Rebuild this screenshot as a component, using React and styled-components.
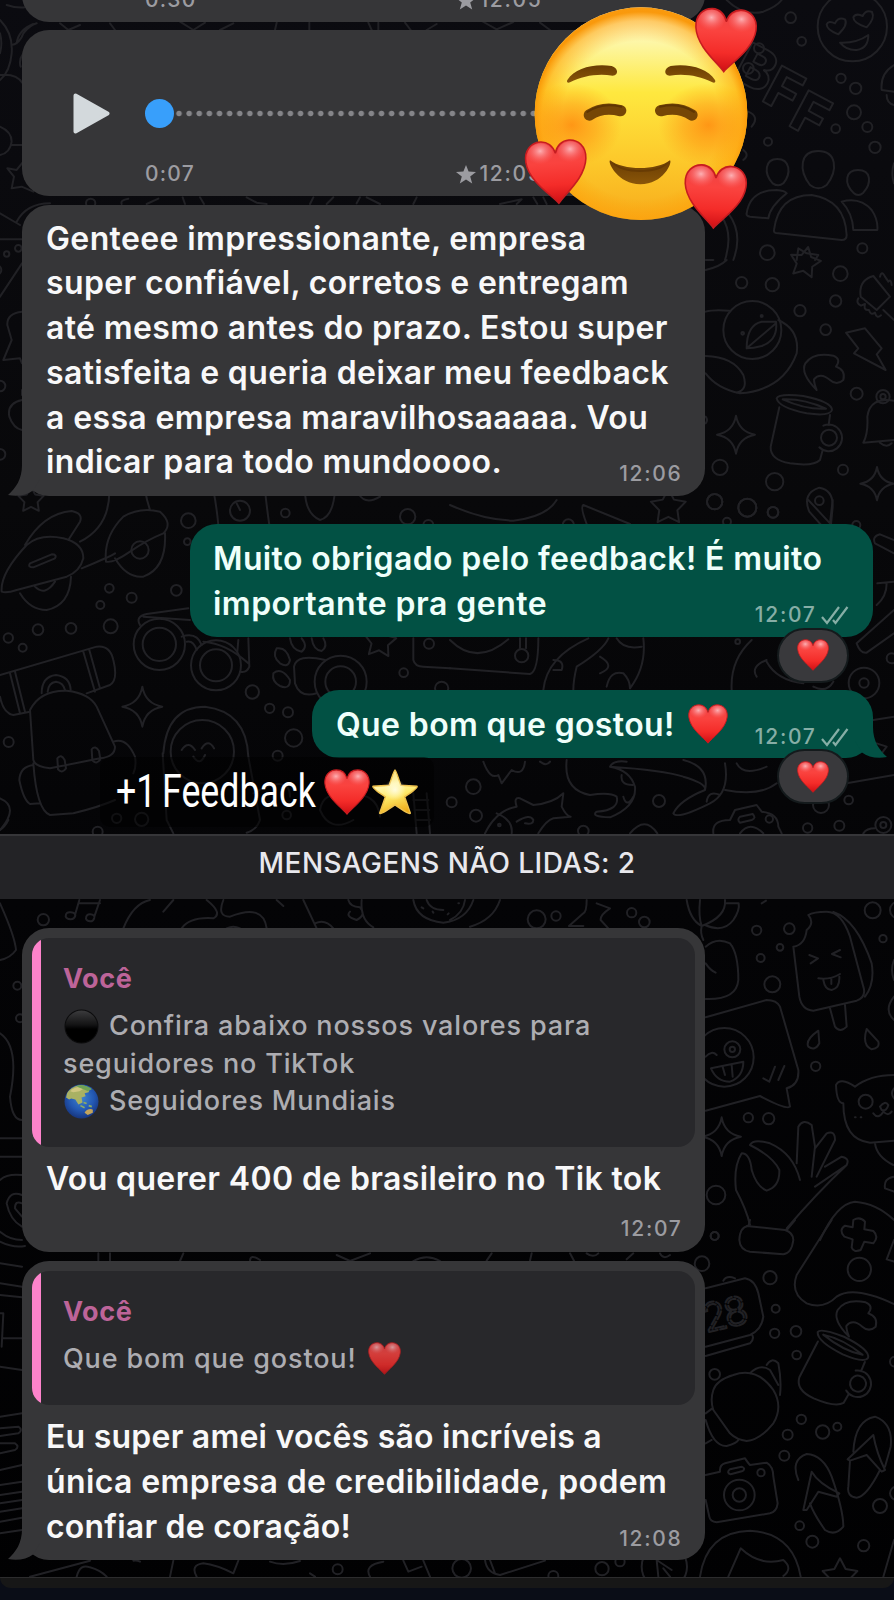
import React, { useId } from 'react';
import styled, { createGlobalStyle } from 'styled-components';

const GlobalStyle = createGlobalStyle`
  *, *::before, *::after { box-sizing: border-box; }
  html, body { margin: 0; padding: 0; background: #0a0d17; }
  body { overflow: hidden; }
`;

const colors = {
  incoming: '#363638',
  outgoing: '#025144',
  quote: '#28282b',
  pink: '#fd83cb',
};

/* ---------- layout ---------- */

const Screen = styled.main`
  position: relative;
  width: 894px;
  height: 1600px;
  overflow: hidden;
  display: flex;
  flex-direction: column;
  font-family: Inter, 'Liberation Sans', sans-serif;
  font-weight: 500;
  background: linear-gradient(#0b0b10, #08080a 500px, #040406 900px, #010102 1600px);
`;

const Wallpaper = styled.svg`
  position: absolute;
  inset: 0;
  width: 894px;
  height: 1600px;
  fill: none;
  stroke: #212125;
  stroke-width: 6;
  stroke-linecap: round;
  stroke-linejoin: round;
  font-family: Inter, sans-serif;
  font-weight: 800;
`;

const MessageList = styled.section`
  position: relative;
  display: flex;
  flex-direction: column;
  padding: ${(p) => p.$pad};
`;

const Bubble = styled.article`
  position: relative;
  display: flex;
  flex-direction: column;
  align-self: ${(p) => (p.$out ? 'flex-end' : 'flex-start')};
  width: ${(p) => p.$width || 683}px;
  margin-top: ${(p) => p.$gap || 0}px;
  padding: ${(p) => p.$pad || '12px 24px 10.5px 24px'};
  border-radius: 27px;
  color: ${(p) => (p.$out ? '#effffb' : '#f8f8f9')};
  background: ${(p) => (p.$out ? colors.outgoing : colors.incoming)};
`;

const Line = styled.p`
  margin: 0;
  font-size: 32px;
  font-weight: 570;
  line-height: 44.8px;
  letter-spacing: ${(p) => p.$track || 0.37}px;
  white-space: nowrap;
`;

const EmojiLine = styled(Line)`
  display: flex;
  align-items: center;
  gap: 13px;
`;

const LastRow = styled.div`
  display: flex;
  align-items: flex-end;
  justify-content: space-between;
`;

const Meta = styled.span`
  display: flex;
  align-items: center;
  justify-content: flex-end;
  gap: ${(p) => p.$gap || 6}px;
  height: 24px;
  margin: ${(p) => p.$margin || '0 0 -1px'};
  font-size: 21px;
  line-height: 24px;
  letter-spacing: ${(p) => p.$track || 1.7}px;
  color: ${(p) => (p.$out ? '#86aea6' : '#9c9ca1')};
`;

const Clock = styled.time`
  margin-right: -1.5px;
`;

const ChecksIcon = styled.svg`
  flex: none;
  width: 28px;
  height: 20px;
  fill: none;
  stroke: currentColor;
  stroke-width: 2.2;
`;

const TailShape = styled.svg`
  position: absolute;
  bottom: 0;
  width: 46px;
  height: 31px;
  ${(p) => (p.$out ? 'right: -14px; transform: scaleX(-1);' : 'left: -14px;')}
  fill: ${(p) => (p.$out ? colors.outgoing : colors.incoming)};
`;

const Reaction = styled.span`
  position: absolute;
  right: 24px;
  bottom: -46px;
  display: flex;
  align-items: center;
  justify-content: center;
  width: 72px;
  height: 55px;
  border: 2px solid #141a1c;
  border-radius: 28px;
  background: #39393c;
`;

/* ---------- voice message ---------- */

const Voice = styled.article`
  display: flex;
  width: 683px;
  height: 166px;
  margin-top: ${(p) => p.$gap}px;
  padding: 63px 24px 11px 51px;
  border-radius: 27px;
  background: ${colors.incoming};
`;

const PlayIcon = styled.svg`
  flex: none;
  width: 37px;
  height: 41px;
  margin-right: 35px;
  fill: #d3d9dc;
  stroke: #d3d9dc;
  stroke-width: 4;
  stroke-linejoin: round;
`;

const VoiceBody = styled.div`
  display: flex;
  flex-direction: column;
  justify-content: space-between;
  width: 396px;
`;

const Track = styled.div`
  display: flex;
  align-items: center;
  height: 40px;
`;

const Knob = styled.span`
  width: 29px;
  height: 29px;
  border-radius: 50%;
  background: #389ffb;
`;

const Dots = styled.span`
  flex: 1;
  height: 7px;
  background: radial-gradient(circle at 5px 3.5px, #858589 2.4px, transparent 3.2px) 0 0 / 10.14px 7px repeat-x;
`;

const VoiceFooter = styled.div`
  display: flex;
  justify-content: space-between;
`;

/* ---------- quoted message ---------- */

const Quote = styled.blockquote`
  margin: 0;
  padding: 22px 20px 27px 31px;
  border-radius: 17px;
  background: linear-gradient(to right, ${colors.pink} 9.5px, ${colors.quote} 9.5px);
  color: #adadb2;
  font-size: 27px;
  font-weight: 540;
  line-height: 37.5px;
  letter-spacing: 0.84px;
`;

const QuoteAuthor = styled.div`
  margin-bottom: 10px;
  font-weight: 750;
  letter-spacing: 0.6px;
  color: #bd6499;
`;

const QuoteLine = styled.div`
  display: flex;
  align-items: center;
  gap: ${(p) => p.$gap || 9}px;
  height: 37.5px;
  white-space: nowrap;
`;

const QuoteReply = styled.div`
  display: flex;
  flex-direction: column;
  padding: 10.5px 14px 0 14px;
`;

/* ---------- divider, footer, stickers ---------- */

const UnreadBar = styled.div`
  position: relative;
  flex: none;
  height: 65px;
  padding-top: 8.5px;
  border-top: 2px solid #363639;
  background: #232326;
  color: #e8e8ed;
  font-size: 28px;
  line-height: 38px;
  letter-spacing: 0.42px;
  text-align: center;
`;

const FooterEdge = styled.footer`
  position: relative;
  flex: none;
  height: 23px;
  margin-top: 17px;
  background: #0a0d17;

  &::before {
    content: '';
    display: block;
    height: 11px;
    border-top: 1px solid #2c2c2d;
    border-radius: 0 0 20px 20px;
    background: #171717;
  }
`;

const FaceSticker = styled.svg`
  position: absolute;
  left: 520px;
  top: 0;
  width: 240px;
  height: 234px;
`;

const Caption = styled.div`
  position: absolute;
  left: 100px;
  top: 757px;
  display: flex;
  align-items: center;
  height: 70px;
  width: 334px;
  padding-left: 16px;
  border-radius: 10px;
  background: rgba(0, 0, 0, 0.5);
  color: #fff;
`;

const CaptionText = styled.span`
  flex: none;
  width: 208px;
  font-family: Roboto, 'Liberation Sans', sans-serif;
  font-size: 45.5px;
  font-weight: 450;
  line-height: 68px;
  word-spacing: -4px;
  white-space: nowrap;
  transform: scaleX(0.785);
  transform-origin: left;
`;

const EmojiSvg = styled.svg`
  flex: none;
  width: ${(p) => p.$size}px;
  height: ${(p) => p.$size}px;
  margin: ${(p) => p.$margin || 0};
  opacity: ${(p) => p.$opacity || 1};
`;

/* ---------- emoji drawings ---------- */

const HEART = 'M50 98C40 85 5 62 2 32C0 13 13 2 27 2C38 2 47 9 50 21C53 9 62 2 73 2C87 2 100 13 98 32C95 62 60 85 50 98Z';

function HeartShape() {
  const id = useId();
  return (
    <>
      <defs>
        <linearGradient id={id} x1="0" y1="0" x2="0" y2="1">
          <stop offset="0" stopColor="#ec4446" />
          <stop offset="0.35" stopColor="#fa433f" />
          <stop offset="0.7" stopColor="#f42c29" />
          <stop offset="1" stopColor="#cf0f14" />
        </linearGradient>
        <radialGradient id={`${id}s`} cx="0.5" cy="0.35" r="0.6">
          <stop offset="0" stopColor="#ffc4c8" stopOpacity="0.85" />
          <stop offset="1" stopColor="#ff6a6a" stopOpacity="0" />
        </radialGradient>
      </defs>
      <path d={HEART} fill={`url(#${id})`} stroke="#c61c20" strokeWidth="2.5" />
      <ellipse cx="26" cy="21" rx="20" ry="17" fill={`url(#${id}s)`} />
      <ellipse cx="74" cy="21" rx="20" ry="17" fill={`url(#${id}s)`} />
    </>
  );
}

const Heart = (props) => (
  <EmojiSvg viewBox="0 0 100 100" {...props}><HeartShape /></EmojiSvg>
);

const StarEmoji = (props) => (
  <EmojiSvg viewBox="0 0 100 100" {...props}>
    <defs>
      <linearGradient id="gold" x1="0.3" y1="0" x2="0.6" y2="1">
        <stop offset="0" stopColor="#f7dc7a" />
        <stop offset="0.35" stopColor="#fff6ac" />
        <stop offset="0.6" stopColor="#fee968" />
        <stop offset="1" stopColor="#efab17" />
      </linearGradient>
      <radialGradient id="shine" cx="0.5" cy="0.45" r="0.4">
        <stop offset="0" stopColor="#fffde6" stopOpacity="0.9" />
        <stop offset="1" stopColor="#fffde6" stopOpacity="0" />
      </radialGradient>
    </defs>
    <path d="M50 4Q52 4 62 36L96 38Q98 42 70 60L82 94Q80 98 50 77Q20 98 18 94L30 60Q2 42 4 38L38 36Q48 4 50 4Z" fill="url(#gold)" stroke="#eec04c" strokeWidth="3" strokeLinejoin="round" />
    <circle cx="50" cy="48" r="28" fill="url(#shine)" />
  </EmojiSvg>
);

const BlackCircle = (props) => (
  <EmojiSvg viewBox="0 0 34 34" {...props}>
    <defs>
      <linearGradient id="ball" x1="0" y1="0" x2="0" y2="1">
        <stop offset="0" stopColor="#3c3c3e" />
        <stop offset="0.45" stopColor="#131314" />
        <stop offset="0.58" stopColor="#000" />
      </linearGradient>
    </defs>
    <circle cx="17" cy="17" r="16" fill="url(#ball)" stroke="#0c0c0d" strokeWidth="1" />
  </EmojiSvg>
);

const Globe = (props) => (
  <EmojiSvg viewBox="0 0 34 34" {...props}>
    <defs>
      <radialGradient id="sea" cx="0.5" cy="0.4" r="0.6">
        <stop offset="0" stopColor="#3f83cf" />
        <stop offset="0.6" stopColor="#2358b3" />
        <stop offset="1" stopColor="#17367f" />
      </radialGradient>
    </defs>
    <circle cx="17" cy="17" r="16.5" fill="url(#sea)" />
    <path d="M3 9C7 2 16 0 21 2C24 3 25 5 24 8L20 9L21 12L17 13L18 18L14 20L11 15L7 14L5 15L2 13Z" fill="#a9b163" />
    <path d="M6 7C10 3 16 2 20 4L15 7L9 8Z" fill="#cfc680" />
    <path d="M12 2C16 0 24 2 27 5L23 7C19 5 15 4 12 2Z" fill="#6fa356" />
    <path d="M19 18l3 1M16 21l4 2M24 21l3 1" stroke="#8fae62" strokeWidth="1.6" />
    <path d="M20 28C21 25 26 23 28 25L28 28L23 30Z" fill="#c3a45c" />
  </EmojiSvg>
);

function SmilingFace() {
  return (
    <FaceSticker viewBox="210 0 720 702">
      <defs>
        <linearGradient id="skin" x1="0" y1="0" x2="0" y2="1">
          <stop offset="0" stopColor="#fefbe0" />
          <stop offset="0.18" stopColor="#fdf6a0" />
          <stop offset="0.4" stopColor="#fee83f" />
          <stop offset="0.7" stopColor="#fdcb2c" />
          <stop offset="1" stopColor="#f7ac1c" />
        </linearGradient>
        <radialGradient id="rim" cx="0.5" cy="0.53" r="0.53">
          <stop offset="0.7" stopColor="#ff9a00" stopOpacity="0" />
          <stop offset="0.88" stopColor="#ff9c05" stopOpacity="0.5" />
          <stop offset="0.96" stopColor="#f99402" stopOpacity="0.95" />
        </radialGradient>
        <radialGradient id="blush">
          <stop offset="0" stopColor="#ff7a08" stopOpacity="0.7" />
          <stop offset="0.5" stopColor="#ff860c" stopOpacity="0.42" />
          <stop offset="1" stopColor="#ff8c10" stopOpacity="0" />
        </radialGradient>
        <linearGradient id="brown" x1="0" y1="0" x2="0" y2="1">
          <stop offset="0" stopColor="#6a3d03" />
          <stop offset="1" stopColor="#8a5609" />
        </linearGradient>
        <clipPath id="face"><circle cx="573" cy="341" r="319" /></clipPath>
      </defs>
      <circle cx="573" cy="341" r="319" fill="url(#skin)" />
      <circle cx="573" cy="341" r="319" fill="url(#rim)" />
      <g clipPath="url(#face)">
        <ellipse cx="365" cy="375" rx="150" ry="125" fill="url(#blush)" />
        <ellipse cx="775" cy="375" rx="150" ry="125" fill="url(#blush)" />
      </g>
      <g fill="url(#brown)">
        <path d="M352 240C375 205 430 190 485 198C505 203 507 226 488 227C440 220 400 228 360 247C353 250 349 246 352 240Z" />
        <path d="M795 240C772 205 717 190 662 198C642 203 640 226 659 227C707 220 747 228 787 247C794 250 798 246 795 240Z" />
        <path d="M480 481C520 512 620 512 660 481C668 488 640 553 571 553C505 553 472 488 480 481Z" />
      </g>
      <path d="M418 345Q458 318 512 332M726 345Q686 318 632 332" fill="none" stroke="#754606" strokeWidth="34" strokeLinecap="round" />
      <path d="M412 336Q455 306 514 320M732 336Q689 306 630 320" fill="none" stroke="#5e3503" strokeWidth="6" strokeLinecap="round" />
      <path d="M487 488C530 517 612 517 654 488C630 525 512 525 487 488Z" fill="#5d3403" opacity="0.6" />
      <g transform="translate(732 24) rotate(3 94 97) scale(1.88 1.95)"><HeartShape /></g>
      <g transform="translate(226 419) rotate(-4 94 97) scale(1.88 1.95)"><HeartShape /></g>
      <g transform="translate(700 493) rotate(3 94 97) scale(1.9 1.95)"><HeartShape /></g>
    </FaceSticker>
  );
}

/* ---------- wallpaper ---------- */

const star = (x, y, r, turn = 0) => {
  const pts = Array.from({ length: 10 }, (_, i) => {
    const a = (Math.PI / 5) * i - Math.PI / 2 + turn;
    const d = i % 2 ? r * 0.52 : r;
    return `${(x + d * Math.cos(a)).toFixed(1)} ${(y + d * Math.sin(a)).toFixed(1)}`;
  });
  return `M${pts.join('L')}Z`;
};

const sparkle = (x, y, r) =>
  `M${x} ${y - r}Q${x + r * 0.15} ${y - r * 0.15} ${x + r} ${y}Q${x + r * 0.15} ${y + r * 0.15} ${x} ${y + r}Q${x - r * 0.15} ${y + r * 0.15} ${x - r} ${y}Q${x - r * 0.15} ${y - r * 0.15} ${x} ${y - r}Z`;

const MUG = 'M980 415Q985 400 1060 408Q1145 425 1146 450Q1140 470 1070 460Q985 442 980 415ZM998 418Q1060 415 1128 446Q1070 450 998 418ZM988 442L962 560Q960 600 1020 610Q1090 620 1110 600L1118 570M1140 465L1136 495M1161 533A24 24 0 1 1 1113 533A24 24 0 1 1 1161 533M1120 497A40 40 0 1 1 1108 562';
const CRESCENT = 'M1100 390Q1050 340 1066 310Q1090 275 1150 287Q1175 297 1158 320Q1188 330 1180 360Q1160 378 1140 360Q1110 335 1092 358Q1092 370 1100 390Z';

/* Each tile is drawn at three times its size, from its own top left corner. */
const tiles = [
  {
    x: 0, y: 0,
    dots: [[20, 762, 8], [55, 745, 10], [272, 610, 14]],
    d: [
      'M20 15Q50 25 75 22M0 60Q40 100 35 160Q30 215 0 240M35 135Q60 130 70 100Q90 75 110 70M50 130Q55 90 100 72M62 200Q55 180 70 160M0 225Q50 220 68 250M0 380Q35 395 35 425Q30 460 0 465M35 435H68M0 640L60 675M50 665Q80 610 150 610M0 718H66M0 100Q8 130 0 160',
      'M330 70L345 90M540 65L580 90L615 68M660 90L700 70M825 90L830 68M928 68V90M1105 68L1115 90M1135 68V90M1215 68L1232 90M1280 90L1310 72M180 70L205 90L240 75',
      'M365 612Q360 600 385 596M440 612L475 596M548 592L555 612M600 592L612 612M740 592L770 608L800 612M930 612L940 592M980 612L1000 592M1070 610L1080 592M1100 592L1140 612M1240 612L1250 592',
      'M22 505L50 510L70 485M22 505L42 530L35 565L65 560L100 575',
    ],
  },
  {
    x: 450, y: 0,
    dots: [[1207, 80, 104], [1022, 53, 16], [1055, 124, 13], [927, 145, 15], [895, 205, 16], [1173, 235, 14], [1217, 265, 17], [1212, 337, 21], [1252, 381, 15], [1157, 386, 13], [1275, 442, 17], [954, 425, 12], [1237, 745, 15], [952, 758, 22]],
    d: [
      'M1165 103Q1130 90 1130 73Q1135 60 1155 70Q1165 50 1185 58Q1195 75 1165 103ZM1250 82Q1210 70 1210 52Q1218 38 1238 48Q1248 28 1266 36Q1276 55 1250 82ZM1170 128Q1220 130 1255 105Q1255 145 1220 150Q1190 152 1170 128Z',
      'M982 477C1020 477 1025 520 1000 550Q985 562 968 550C940 520 945 477 982 477ZM1104 453C1160 453 1165 510 1130 555Q1105 575 1080 555C1045 510 1050 453 1104 453ZM1224 510C1265 510 1265 550 1240 578Q1225 592 1210 578C1182 550 1185 510 1224 510Z',
      'M890 640Q900 570 980 570Q1005 572 1010 580Q960 620 955 655L900 650Q888 648 890 640ZM972 690Q985 585 1085 585Q1185 600 1190 705Q1190 720 1175 720L985 700Q970 700 972 690ZM1175 605Q1230 590 1265 630Q1285 660 1282 690L1210 690Q1208 640 1175 605Z',
      'M835 640Q880 700 850 780M815 650Q850 700 825 780M1332 195Q1290 220 1295 270L1332 275M1310 285Q1310 310 1332 315M830 0Q880 50 940 35Q980 20 995 0M895 335Q930 350 905 380M880 450Q900 465 880 480M1332 490Q1322 520 1332 550',
      'M1040 780L1045 745L1070 760L1105 765L1095 780M90 60L140 88L190 66M270 68L300 90M150 612L215 598L200 612M250 592L262 612M280 592L290 612',
    ],
  },
  {
    x: 0, y: 260,
    dots: [[0, 378, 16], [0, 583, 16]],
    d: ['M0 110L66 10M66 155Q20 160 22 195L35 240L10 300L60 295L66 310M66 420Q20 430 28 470Q40 505 66 510M0 40Q8 30 0 20M66 390V405'],
  },
  {
    x: 450, y: 260,
    dots: [[875, 68, 17], [967, 74, 20], [1171, 41, 22], [1157, 123, 17], [1050, 152, 17], [1127, 209, 16], [1220, 401, 18], [810, 622, 23], [974, 665, 26], [1179, 629, 15], [794, 725, 23], [892, 743, 27], [969, 757, 16], [907, 210, 87], [935, 168, 3], [878, 220, 4], [1299, 410, 20], [1299, 410, 8], [1108, 722, 13]],
    d: [
      star(1065, 8, 48, 0.2), sparkle(858, 524, 57), sparkle(1281, 671, 50), star(655, 742, 55), MUG, CRESCENT,
      'M767 155Q790 148 838 152M985 180Q1050 210 1040 280Q1000 390 870 400Q800 385 767 340M767 288Q850 290 880 345Q895 390 860 398M890 265Q890 195 935 185L978 185Q985 240 935 258Q910 265 890 265ZM890 265L978 190',
      'M1188 218L1245 205L1295 265L1280 283L1307 330L1212 280L1225 265Z',
      'M1332 422Q1260 410 1252 470Q1255 520 1240 548L1332 540M1290 548Q1310 565 1325 550M1140 825L1078 755Q1055 700 1108 683Q1150 690 1148 740L1140 825M767 30Q810 20 830 0M767 0L790 0M767 470Q775 480 767 490',
      'M1270 48L1320 110L1280 150L1232 110Q1225 60 1270 48ZM1290 50q5 -20 15 0l10 15q8 -10 10 10M1225 115q-8 15 8 22l12 -5q-5 20 12 18q5 18 18 8q5 20 18 8M1300 150L1332 180',
    ],
  },
  {
    x: 0, y: 500,
    dots: [[565, 62, 22], [562, 125, 10], [328, 265, 13], [395, 293, 15], [529, 271, 16], [301, 315, 12], [332, 379, 21], [213, 385, 16], [114, 389, 16], [25, 414, 14], [68, 443, 12], [1223, 50, 23], [1285, 75, 15], [856, 39, 13], [757, 576, 20], [809, 625, 14], [864, 637, 15], [881, 714, 26], [833, 767, 15], [26, 726, 15], [1211, 518, 13], [1287, 431, 15], [425, 958, 20], [350, 955, 14], [293, 995, 15], [420, 150, 26], [720, 32, 30], [478, 433, 77], [478, 433, 50], [648, 496, 75], [648, 496, 48], [1022, 545, 78], [1022, 545, 46], [607, 755, 95], [860, 945, 13], [1325, 565, 20]],
    d: [
      star(93, 0, 40), star(1140, 425, 50, 0.1), sparkle(427, 620, 60),
      'M5 275Q0 220 80 135Q120 100 190 115Q250 130 250 175Q240 215 200 230L50 270Q20 280 5 275ZM75 135Q130 40 215 33Q250 40 240 65L205 120M90 190L155 163Q172 163 165 175L100 202Q82 202 90 190ZM60 280Q90 330 140 330Q210 315 213 230M105 260Q135 290 165 245M240 125Q330 80 328 -30M245 205Q330 170 345 160',
      'M318 185Q310 110 370 50Q420 20 480 35Q520 70 490 100Q440 120 390 155Q340 190 318 185ZM345 175Q380 235 430 230Q500 205 495 100M435 -30Q440 0 450 30M640 -30Q650 20 655 75M795 -30Q800 20 808 75M710 10L720 30M915 -30Q915 40 960 60Q1000 50 1005 -30M1070 -30Q1090 20 1140 -10',
      'M420 375Q405 350 440 342L565 325M430 350L570 360M545 410Q590 395 605 435M560 425Q580 420 590 450M745 415L748 500Q740 520 720 515M715 420L712 455M610 425Q680 430 745 490',
      'M830 445Q860 440 870 480Q865 505 840 490Q815 470 830 445ZM820 520Q845 500 870 540Q870 570 840 558Q815 545 820 520ZM870 415Q875 450 905 455Q925 440 905 415M935 415Q940 450 965 453Q985 440 970 415M975 480Q890 460 882 500L885 550Q900 595 950 580M1240 415L1240 480Q1245 500 1270 500L1350 505',
      'M0 525L290 440Q330 435 340 480Q355 540 330 555L260 580M90 635L40 645Q10 640 0 590M30 520L60 640M45 515L75 635M250 455L285 575M268 450L300 565M125 580Q125 530 168 525Q210 530 212 570M143 575Q145 548 168 545Q190 548 195 570',
      'M90 630Q120 570 200 572Q270 580 290 620L345 740Q345 770 300 775L150 805Q105 800 100 780ZM100 790Q110 930 150 945L220 940Q300 920 345 900M100 795Q60 800 58 840Q70 900 90 912L120 910M340 725Q380 710 405 770Q410 800 400 820M172 775Q183 760 194 780L198 805Q186 822 174 808ZM275 748Q286 735 297 753L301 778Q289 795 277 781ZM0 895Q60 920 0 990',
      'M490 760Q500 620 615 620Q740 635 745 770L780 960Q770 990 740 998M488 760L500 960L520 1000M545 750Q565 720 585 750M605 745Q625 715 642 745M580 770Q600 800 615 765M760 880Q870 820 870 890M960 930Q970 870 1040 890Q1130 870 1140 950M960 930Q990 1000 1060 960M1240 880L1250 1000M1280 880L1290 1000M1240 900H1285M1243 930H1288M1246 960H1290',
    ],
  },
  {
    x: 450, y: 500,
    dots: [[892, 23, 27], [969, 37, 16], [831, 65, 12], [794, 5, 23], [1219, 75, 12], [1242, 549, 46], [1242, 549, 14], [1325, 475, 15], [863, 425, 7], [70, 860, 22], [78, 947, 18], [5, 907, 15], [627, 903, 18], [1196, 900, 13], [400, 993, 16], [1113, 915, 24], [1073, 984, 14], [1168, 977, 15], [1300, 975, 24], [1300, 975, 9], [215, 467, 20], [958, 957, 11], [148, 975, 4], [355, 75, 17]],
    d: [
      'M0 15Q100 60 190 62Q290 50 320 0M540 72L400 15Q390 20 410 72M1075 0L1140 70L1148 0M1332 120L1290 103Q1265 110 1275 130L1332 160M1282 250L1332 245M1310 250Q1310 290 1280 315M1220 430L1332 330M1220 430Q1230 460 1250 458L1332 400',
      'M0 420Q80 500 175 418M0 505L240 522Q265 515 265 415M210 415V445M228 415V445M475 415Q460 450 380 500Q370 540 370 570M415 415Q290 470 280 570M580 415Q590 500 540 565M450 470Q500 500 450 520M470 560Q480 510 520 520Q540 540 540 565M310 480Q345 480 335 510L310 510M500 415Q520 450 575 440M905 420Q840 480 845 570M950 485Q980 540 1060 550M920 530Q900 500 950 480M1090 560Q1130 580 1150 545',
      'M350 780Q340 870 420 885Q480 875 500 890Q510 930 440 935Q420 950 480 952Q560 920 555 860Q540 810 480 800Q490 780 530 785M700 780Q780 800 765 870Q690 900 670 940Q680 960 780 910Q840 880 825 790M480 800Q640 810 700 830Q770 850 765 870M515 825Q510 855 548 855M520 890Q530 925 550 890M770 905Q775 870 810 885',
      'M105 1000Q140 930 200 920Q190 890 210 895L250 915Q310 910 340 880L335 920Q350 950 362 950L310 955Q290 960 265 1000M140 940Q190 960 185 1000M200 965Q240 940 250 960Q250 975 225 970M100 785Q120 840 145 825L155 850L185 810Q220 830 225 785M270 785Q290 800 300 785',
      'M790 1000Q785 960 840 960L855 930L920 915L935 935Q985 940 985 980L995 1000M870 950L908 942Q920 955 905 960L870 968Q860 960 870 950ZM870 1000Q900 960 940 1000M825 870Q930 890 980 850M860 790Q880 830 950 800M1190 850L1332 825M1270 660L1332 650M1280 730L1310 740L1295 760M540 1000Q585 945 622 1000M1240 1000Q1250 985 1275 985',
    ],
  },
  {
    x: 0, y: 820,
    dots: [[130, 299, 17], [52, 497, 12], [60, 595, 12]],
    d: [
      'M238 240L225 285M235 250L300 250M300 240L283 290M197 290q0 -15 15 -13t14 10q-4 12 -15 11t-14 -8ZM258 296q0 -14 13 -13t12 10q-3 12 -13 11t-12 -8Z',
      'M0 250Q45 350 48 390Q30 415 0 420M370 325Q400 250 450 240M490 275L520 240M620 240Q670 280 640 295Q570 290 545 325M670 240Q650 290 690 290Q790 250 800 325M830 240L850 258M910 240L950 325M1045 240Q1050 260 1080 262Q1100 285 1070 300Q1035 290 1050 275M1085 240Q1080 300 1120 322M945 310Q975 295 1000 325M1240 240Q1250 300 1330 308Q1400 300 1420 240M1280 240Q1290 270 1330 270',
      'M0 640Q60 680 30 830Q35 900 66 900M0 955H66M0 1010H66M25 0Q15 20 0 30M1265 262L1270 265M1298 275L1300 278M1343 283L1346 280M680 325Q700 315 720 325',
    ],
  },
  {
    x: 450, y: 820,
    dots: [[260, 298, 27], [318, 288, 14], [545, 278, 14], [583, 306, 16], [920, 331, 14], [1018, 326, 16], [990, 382, 10], [932, 414, 12], [967, 493, 24], [1268, 271, 24], [1299, 356, 11], [1097, 739, 14], [895, 893, 14], [956, 896, 17], [798, 1125, 28], [794, 1248, 12], [823, 712, 88], [847, 688, 24], [847, 688, 8], [1247, 845, 21], [1345, 270, 25]],
    d: [
      sparkle(815, 950, 58),
      'M1030 380L1048 530Q1055 570 1090 572L1220 542Q1250 530 1240 500L1200 350Q1175 275 1130 275Q1090 275 1075 285Q1095 310 1070 330Q1065 375 1030 380ZM1150 276Q1220 300 1265 430Q1275 490 1245 530M1140 565L1155 620Q1170 640 1190 620L1185 555M1078 405L1104 415L1082 430M1170 390L1146 402L1172 412M1105 475Q1140 480 1170 462M1120 480Q1125 510 1145 510Q1170 505 1168 470M1144 478V492',
      'M710 240Q720 300 755 318Q830 290 825 240M750 240Q745 290 755 318Q750 340 760 360M765 315Q820 340 850 300Q870 270 866 250L830 250M767 380Q800 350 840 370Q865 400 865 480Q860 540 767 537M767 430Q780 450 797 458',
      'M767 592L950 540Q980 540 990 560L1045 750Q1048 795 1010 805L1020 860Q1010 870 930 828L767 872M783 745L880 725Q880 770 840 785Q800 785 783 745ZM818 740L825 765M845 735L848 770M767 710Q785 690 800 705M940 775L958 785L975 740M985 780L1003 738',
      'M1105 632Q1065 660 1075 680Q1095 695 1108 670ZM1250 627Q1235 675 1265 688Q1290 685 1285 665ZM1332 765Q1260 765 1215 800Q1170 770 1158 795Q1160 850 1180 850Q1180 960 1260 968L1332 962M1275 970Q1280 1010 1330 1035M1332 1070Q1300 1075 1305 1105L1332 1115M1215 892h2M1232 892h2M1290 860q15 -20 25 -5q-5 20 -20 15zM1270 880q15 20 30 -5q15 15 25 0M1332 805Q1320 820 1332 835M1332 420Q1320 450 1332 480M1332 530Q1300 570 1332 600',
      'M900 1215Q890 1170 858 1110Q850 1040 875 1000Q900 1000 905 1050Q920 1100 950 1112Q990 1100 988 1050Q970 1010 900 975Q910 955 960 970Q1030 1000 1050 1080M1040 1030L1045 920Q1060 895 1085 915L1095 980L1085 1070M1095 985L1130 940Q1155 930 1155 960L1100 1070M1125 1040L1175 1010Q1200 1015 1190 1035L1095 1100M1190 1035Q1100 1120 1010 1225',
      'M410 240Q410 275 400 280L357 318L400 318M440 250L480 265Q450 285 452 300L475 325M0 300Q40 280 45 240M60 320Q130 300 150 240M25 250h2',
      'M1110 1260Q1160 1150 1215 1145Q1280 1150 1332 1200M935 250L948 242',
    ],
  },
  {
    x: 0, y: 1160,
    dots: [[1013, 1228, 15]],
    d: [
      'M66 45Q20 40 0 60M66 105Q30 90 20 130Q30 180 66 200M66 130Q45 120 45 145L66 170M0 215Q30 240 66 240M0 245Q40 265 75 258M0 310L66 320M0 370L66 380M0 405L66 412M0 460H10L5 560M10 535H66M0 620L66 630',
      'M0 770L66 760M0 805L55 800Q70 810 55 820L0 828M0 850L45 850Q60 860 45 870L0 880M0 930L66 915M0 975L66 965M0 1005L66 995M0 1030L66 1020M0 1055L66 1045M0 1085L66 1073M0 1120L66 1110',
      'M295 280V303M330 280V303M550 280L540 303M750 303Q750 280 780 300M1010 285L1050 303L1110 280M1240 303Q1280 280 1320 303',
      'M90 1250L270 1202M230 1250Q240 1210 270 1222Q300 1230 320 1250M420 1205Q410 1200 400 1202M520 1202L510 1250M590 1250Q570 1215 610 1210Q650 1215 700 1240L715 1202M810 1205Q850 1220 900 1203M930 1240L945 1250M1110 1250Q1090 1215 1150 1205M1210 1202L1225 1235L1265 1220M1270 1202L1290 1250',
    ],
  },
  {
    x: 450, y: 1220,
    dots: [[794, 48, 12], [756, 131, 22], [960, 173, 20], [977, 266, 12], [974, 340, 14], [1038, 334, 16], [1040, 405, 13], [794, 463, 16], [1054, 598, 14], [1013, 644, 15], [1118, 636, 20], [1162, 620, 12], [1003, 707, 15], [1290, 858, 21], [1049, 917, 13], [1087, 965, 18], [1241, 977, 17], [1340, 820, 20], [456, 1046, 20], [310, 1068, 15], [35, 1045, 28], [1228, 148, 35], [868, 825, 46], [868, 825, 20], [933, 758, 11], [643, 1040, 68], [510, 1025, 14], [1335, 425, 15]],
    d: [
      star(1170, 1070, 55),
      'M900 0L895 18Q870 20 868 60Q870 90 900 95L1000 103Q1025 100 1030 60Q1030 38 1005 30L890 18M1010 30L1035 0M1145 0L1040 165Q1020 220 1070 250Q1120 270 1160 230Q1210 195 1332 252M1332 60L1310 118L1332 125',
      'M1210 0Q1230 -12 1245 5L1243 28L1270 33Q1288 50 1270 70L1243 65L1232 90Q1210 98 1205 82L1208 58L1183 50Q1165 30 1185 17L1208 22Z',
      'M767 205L885 175Q915 180 925 220L940 290Q935 330 900 345L767 380M767 408L900 370Q915 355 905 343M820 182Q830 165 855 175',
      'M790 510Q800 480 850 465Q920 440 970 510Q1000 560 970 610Q930 660 890 663Q860 660 840 640L790 570Q780 540 790 510ZM900 460Q930 430 960 450L985 495M950 435Q965 410 985 430Q995 480 990 525M767 580L787 565M767 600Q790 680 830 678Q860 670 865 660M767 670L785 660',
      'M767 765L810 755Q808 735 825 730L885 715Q895 730 900 735L950 728Q970 740 970 770L983 850Q980 875 960 880L800 907Q780 905 778 890L767 840M840 748L875 740Q888 745 878 753L842 763Q828 758 840 748Z',
      'M1045 780Q1020 720 1070 702Q1120 705 1145 770Q1180 870 1180 920Q1155 950 1125 930Q1090 880 1080 850M1060 870L1085 755Q1105 790 1168 820L1160 830L1105 815L1070 870ZM1210 695Q1215 600 1275 590Q1330 610 1322 680L1305 740M1290 750Q1250 830 1220 833Q1190 830 1195 800L1200 722M1193 718L1270 645Q1280 700 1305 750L1295 755L1250 705L1200 722Z',
      'M750 1070Q770 935 900 932Q1030 940 1052 1070M835 1070L872 985Q930 1040 1000 1020Q1030 1045 1000 1068M1300 1070L1332 960M620 1020L625 1070M620 1020L665 1050M640 1045L660 1070M105 1020Q110 1060 150 1065L285 1022M120 1020L135 1060M110 122L125 100M240 122L245 100M360 100L372 122M530 118L550 100M630 100Q640 120 660 105M410 100Q430 115 445 100',
    ],
  },
];

const ChatWallpaper = () => (
  <Wallpaper viewBox="0 0 894 1600" aria-hidden="true">
    {tiles.map((t) => (
      <g key={`${t.x}-${t.y}`} transform={`translate(${t.x} ${t.y}) scale(0.33333)`}>
        {t.d.map((d) => <path key={d} d={d} />)}
        {t.dots.map(([cx, cy, r]) => <circle key={`${cx}-${cy}-${r}`} cx={cx} cy={cy} r={r} />)}
      </g>
    ))}
    <g transform="translate(450 1220) scale(0.33333)">
      <path d={MUG} transform="translate(1160 452) rotate(15) translate(-1065 -512)" />
      <path d={CRESCENT} transform="translate(97 -40)" />
      <text fontSize="118" strokeDasharray="26 8" transform="translate(768 338) rotate(-13)" fontWeight="300" letterSpacing="-8">28</text>
    </g>
    <g transform="translate(450 0) scale(0.33333)" fontSize="168">
      <text transform="translate(842 230) rotate(28)">B</text>
      <text transform="translate(930 300) rotate(28)">F</text>
      <text transform="translate(1010 374) rotate(28)">F</text>
    </g>
  </Wallpaper>
);

/* ---------- message parts ---------- */

const Tail = ({ out }) => (
  <TailShape $out={out} viewBox="0 0 46 31">
    <path d="M14 0C14 14 8 23 0 30C10 32 19 30 25 25.5L32 14V0Z" />
  </TailShape>
);

const Checks = () => (
  <ChecksIcon viewBox="0 0 28 20">
    <path d="M1 12L6 18L18 2M12 15L14.5 18L26.5 2" />
  </ChecksIcon>
);

const Stamp = ({ time, out, margin }) => (
  <Meta $out={out} $margin={margin}>
    <Clock>{time}</Clock>
    {out && <Checks />}
  </Meta>
);

const StarredStamp = ({ time }) => (
  <Meta $gap={3}>
    <svg width="20" height="19" viewBox="0 0 20 19" fill="currentColor">
      <path d="M10 0L12.6 6.6L20 7L14.2 11.5L16.2 18.6L10 14.6L3.8 18.6L5.8 11.5L0 7L7.4 6.6Z" />
    </svg>
    <Clock>{time}</Clock>
  </Meta>
);

const HeartReaction = () => (
  <Reaction><Heart $size={32} /></Reaction>
);

const VoiceMessage = ({ length, time, gap }) => (
  <Voice $gap={gap}>
    <PlayIcon viewBox="0 0 37 41"><path d="M2.5 2.5L34.5 20.5L2.5 38.5Z" /></PlayIcon>
    <VoiceBody>
      <Track><Knob /><Dots /></Track>
      <VoiceFooter>
        <Meta $track={1.2}>{length}</Meta>
        <StarredStamp time={time} />
      </VoiceFooter>
    </VoiceBody>
  </Voice>
);

export default function App() {
  return (
    <>
      <GlobalStyle />
      <Screen>
        <ChatWallpaper />

        <MessageList $pad="0 21px 75.5px 22px">
          <VoiceMessage length="0:30" time="12:05" gap={-144} />
          <VoiceMessage length="0:07" time="12:05" gap={8} />

          <Bubble $gap={8.5}>
            <Line>Genteee impressionante, empresa</Line>
            <Line>super confiável, corretos e entregam</Line>
            <Line>até mesmo antes do prazo. Estou super</Line>
            <Line>satisfeita e queria deixar meu feedback</Line>
            <Line>a essa empresa maravilhosaaaaa. Vou</Line>
            <LastRow>
              <Line>indicar para todo mundoooo.</Line>
              <Stamp time="12:06" />
            </LastRow>
            <Tail />
          </Bubble>

          <Bubble $out $gap={28.5} $pad="12.5px 24px 10.5px 23px">
            <Line>Muito obrigado pelo feedback! É muito</Line>
            <LastRow>
              <Line $track={0.48}>importante pra gente</Line>
              <Stamp out time="12:07" />
            </LastRow>
            <HeartReaction />
          </Bubble>

          <Bubble $out $width={561} $gap={53} $pad="13px 24px 10.7px 24px">
            <LastRow>
              <EmojiLine>
                Que bom que gostou!
                <Heart $size={40} $margin="-3px 0 0" />
              </EmojiLine>
              <Stamp out time="12:07" />
            </LastRow>
            <Tail out />
            <HeartReaction />
          </Bubble>
        </MessageList>

        <UnreadBar>MENSAGENS NÃO LIDAS: 2</UnreadBar>

        <MessageList $pad="29px 21px 0 22px">
          <Bubble $pad="10px 10px 11.3px 10px">
            <Quote>
              <QuoteAuthor>Você</QuoteAuthor>
              <QuoteLine><BlackCircle $size={35} $margin="0 1px 0 1px" />Confira abaixo nossos valores para</QuoteLine>
              <QuoteLine>seguidores no TikTok</QuoteLine>
              <QuoteLine><Globe $size={35} $margin="0 1px 0 1px" />Seguidores Mundiais</QuoteLine>
            </Quote>
            <QuoteReply>
              <Line>Vou querer 400 de brasileiro no Tik tok</Line>
              <Stamp time="12:07" margin="15px 0 0" />
            </QuoteReply>
          </Bubble>

          <Bubble $gap={8.5} $pad="10px 10px 10.3px 10px">
            <Quote>
              <QuoteAuthor>Você</QuoteAuthor>
              <QuoteLine $gap={12}>Que bom que gostou!<Heart $size={33} $opacity={0.82} $margin="-2px 0 0" /></QuoteLine>
            </Quote>
            <QuoteReply>
              <Line $track={0.22}>Eu super amei vocês são incríveis a</Line>
              <Line>única empresa de credibilidade, podem</Line>
              <LastRow>
                <Line $track={0.22}>confiar de coração!</Line>
                <Stamp time="12:08" />
              </LastRow>
            </QuoteReply>
            <Tail />
          </Bubble>
        </MessageList>

        <FooterEdge />

        <SmilingFace />
        <Caption>
          <CaptionText>+1 Feedback</CaptionText>
          <Heart $size={46} />
          <StarEmoji $size={48} $margin="0 0 0 1px" />
        </Caption>
      </Screen>
    </>
  );
}
